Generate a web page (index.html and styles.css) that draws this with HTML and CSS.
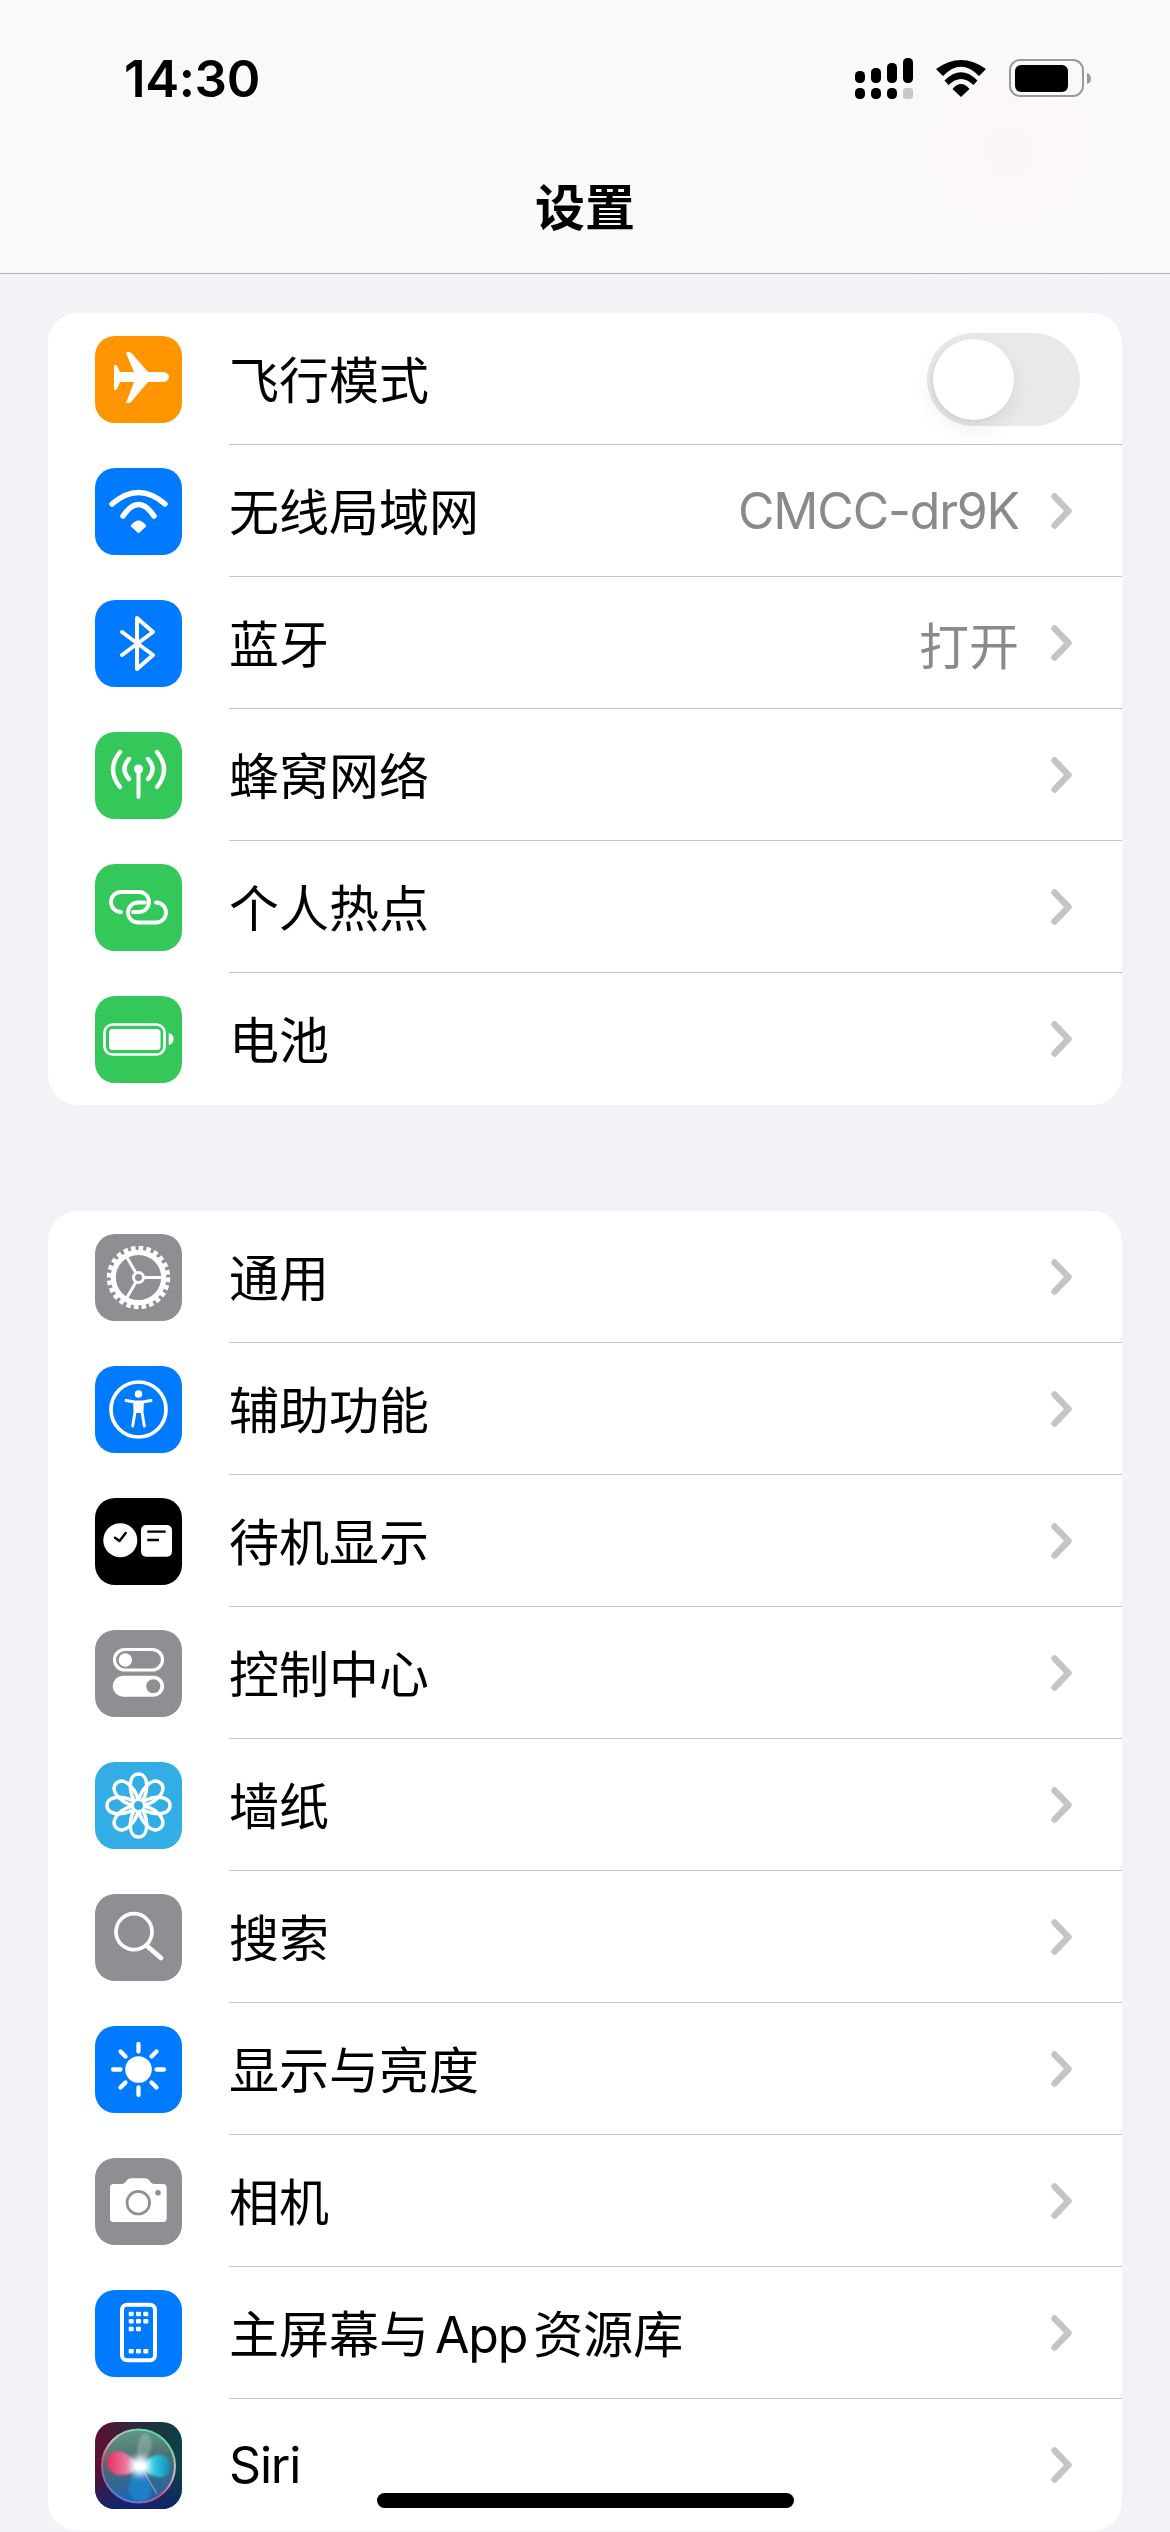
FILE: index.html
```html
<!DOCTYPE html>
<html lang="zh-CN">
<head>
    <meta charset="UTF-8">
    <meta name="viewport" content="width=device-width, initial-scale=1.0">
    <title>设置</title>
    <link rel="stylesheet" href="styles.css">
</head>
<body>
    <svg class="defs" width="0" height="0">
        <symbol id="chev" viewBox="0 0 21 36">
            <path d="M3.5 3.5 L17.5 18 L3.5 32.5" fill="none" stroke="#c4c4c6" stroke-width="6.4" stroke-linecap="round" stroke-linejoin="round"/>
        </symbol>
        <path id="petal" d="M43.5 43.5 C32.5 33 32.5 12 43.5 12 C54.5 12 54.5 33 43.5 43.5 Z" fill="none" stroke="#fff" stroke-width="3.5"/>
    </svg>

    <header class="top">
        <div class="status">
            <span class="time">14:30</span>
            <div class="status-icons">
                <svg width="58" height="41" viewBox="0 0 58 41">
                    <rect x="0" y="13" width="10" height="12" rx="4.5"/>
                    <rect x="16" y="10" width="10" height="15" rx="4.5"/>
                    <rect x="32" y="5" width="10" height="20" rx="4.5"/>
                    <rect x="48" y="0" width="10" height="25" rx="4.5"/>
                    <rect x="0" y="30" width="10" height="11" rx="4.5"/>
                    <rect x="16" y="30" width="10" height="11" rx="4.5"/>
                    <rect x="32" y="30" width="10" height="11" rx="4.5"/>
                    <rect x="48" y="30" width="10" height="11" rx="3" fill="#c8c8c8"/>
                </svg>
                <svg width="50" height="37" viewBox="0 0 50 37">
                    <path d="M0 9 Q25 -9 50 9 L43 16 Q25 -2.6 7 16 Z"/>
                    <path d="M8.5 20.5 Q25 4 41.5 20.5 L37.5 25 Q25 13 12.5 25 Z"/>
                    <path d="M16.5 29 Q25 19 33.5 29 L25 37 Z"/>
                </svg>
                <svg width="82" height="38" viewBox="0 0 82 38">
                    <rect x="1" y="1" width="73" height="36" rx="10" fill="none" stroke="#9a9a9a" stroke-width="2"/>
                    <rect x="6" y="6" width="53" height="27" rx="6"/>
                    <path d="M78 14 Q82 15 82 19.5 Q82 24 78 25 Z" fill="#9a9a9a"/>
                </svg>
            </div>
        </div>
        <h1 class="title">设置</h1>
    </header>

    <main class="content">
        <section class="card">
            <div class="row">
                <svg class="icon orange" viewBox="0 0 87 87">
                    <path fill="#fff" d="M31 17 Q31.5 16 33 16 L36 16.5 L53 36 H66 Q74 36 74 41 Q74 46 66 46 H53 L36 66 Q35 67 33 67 H31 L39 46 H25 L22 53 Q21.5 54 20 54 H19 V29 H20 Q21.5 29 22 30 L25 36 H39 Z"/>
                </svg>
                <div class="row-body toggle-row">
                    <span class="label">飞行模式</span>
                    <div class="toggle"><div class="knob"></div></div>
                </div>
            </div>
            <div class="row">
                <svg class="icon blue" viewBox="0 0 87 87">
                    <g fill="none" stroke="#fff" stroke-width="5.5" stroke-linecap="round">
                        <path d="M17 36 Q43.5 13 70 36"/>
                        <path d="M28 48 Q43.5 25 59 48"/>
                    </g>
                    <path fill="#fff" d="M35.5 58 Q43.5 47 51.5 58 L44.5 64.5 Q43.5 65.5 42.5 64.5 Z"/>
                </svg>
                <div class="row-body">
                    <span class="label">无线局域网</span>
                    <span class="value latin">CMCC-dr9K</span>
                    <svg class="chev"><use href="#chev"/></svg>
                </div>
            </div>
            <div class="row">
                <svg class="icon blue" viewBox="0 0 87 87">
                    <path d="M27 32 L58 55 L42 69 V18 L58 32 L27 55" fill="none" stroke="#fff" stroke-width="4" stroke-linecap="round" stroke-linejoin="round"/>
                </svg>
                <div class="row-body">
                    <span class="label">蓝牙</span>
                    <span class="value">打开</span>
                    <svg class="chev"><use href="#chev"/></svg>
                </div>
            </div>
            <div class="row">
                <svg class="icon green" viewBox="0 0 87 87">
                    <g fill="none" stroke="#fff" stroke-linecap="round">
                        <path stroke-width="4" d="M43.5 38 V65"/>
                        <g stroke-width="4.4">
                            <path d="M34 27 Q25 37 34 47"/>
                            <path d="M25 20 Q11 37.5 25 55"/>
                            <path d="M53 27 Q62 37 53 47"/>
                            <path d="M62 20 Q76 37.5 62 55"/>
                        </g>
                    </g>
                    <circle cx="43.5" cy="37" r="4.6" fill="#fff"/>
                </svg>
                <div class="row-body">
                    <span class="label">蜂窝网络</span>
                    <svg class="chev"><use href="#chev"/></svg>
                </div>
            </div>
            <div class="row">
                <svg class="icon green" viewBox="0 0 87 87">
                    <g fill="none" stroke="#fff" stroke-width="3.8" stroke-linecap="round">
                        <path d="M26 48 A10 10 0 0 1 26 28 H44 A10 10 0 0 1 44 48 H38"/>
                        <path d="M61 38.5 A10 10 0 0 1 61 58.5 H43 A10 10 0 0 1 43 38.5 H50"/>
                    </g>
                </svg>
                <div class="row-body">
                    <span class="label">个人热点</span>
                    <svg class="chev"><use href="#chev"/></svg>
                </div>
            </div>
            <div class="row">
                <svg class="icon green" viewBox="0 0 87 87">
                    <rect x="9.5" y="28.5" width="60" height="30" rx="8" fill="none" stroke="#fff" stroke-width="2.7"/>
                    <rect x="14" y="33" width="51.5" height="21" rx="3.5" fill="#fff"/>
                    <path d="M73.7 37 Q78.5 38 78.5 43 Q78.5 48 73.7 49 Z" fill="#fff"/>
                </svg>
                <div class="row-body">
                    <span class="label">电池</span>
                    <svg class="chev"><use href="#chev"/></svg>
                </div>
            </div>
        </section>

        <section class="card">
            <div class="row">
                <svg class="icon gray" viewBox="0 0 87 87">
                    <g fill="none" stroke="#fff">
                        <circle cx="43.5" cy="43.5" r="25.2" stroke-width="5.2"/>
                        <circle cx="43.5" cy="43.5" r="29.5" stroke-width="4.5" stroke-dasharray="4.6 3.12"/>
                        <path stroke-width="3" d="M49.5 43.5 H68 M40.5 38.3 L31 21.8 M40.5 48.7 L31 65.2"/>
                        <circle cx="43.5" cy="43.5" r="5" stroke-width="3"/>
                    </g>
                </svg>
                <div class="row-body">
                    <span class="label">通用</span>
                    <svg class="chev"><use href="#chev"/></svg>
                </div>
            </div>
            <div class="row">
                <svg class="icon blue" viewBox="0 0 87 87">
                    <circle cx="43.5" cy="43.5" r="27.5" fill="none" stroke="#fff" stroke-width="3.7"/>
                    <circle cx="43.5" cy="28" r="3.8" fill="#fff"/>
                    <path fill="#fff" d="M39 36.5 H48 L47.5 47 H39.5 Z"/>
                    <path fill="none" stroke="#fff" stroke-width="2.9" stroke-linecap="round" stroke-linejoin="round" d="M31 34.5 L39.5 36 L40 46 L37.7 60 M56 34.5 L47.5 36 L47 46 L49.3 60 M39.5 36 H47.5"/>
                </svg>
                <div class="row-body">
                    <span class="label">辅助功能</span>
                    <svg class="chev"><use href="#chev"/></svg>
                </div>
            </div>
            <div class="row">
                <svg class="icon black" viewBox="0 0 87 87">
                    <circle cx="25.3" cy="42.3" r="17" fill="#fff"/>
                    <path d="M20 39.7 L24.5 43 L30.7 35" fill="none" stroke="#000" stroke-width="2.5" stroke-linecap="round" stroke-linejoin="round"/>
                    <rect x="46" y="27" width="31" height="31.7" rx="5" fill="#fff"/>
                    <path d="M52.3 33.7 H70.7 M52.3 42 H64" stroke="#000" stroke-width="2.3"/>
                </svg>
                <div class="row-body">
                    <span class="label">待机显示</span>
                    <svg class="chev"><use href="#chev"/></svg>
                </div>
            </div>
            <div class="row">
                <svg class="icon gray" viewBox="0 0 87 87">
                    <rect x="19.5" y="19.5" width="48" height="20.5" rx="10.25" fill="none" stroke="#fff" stroke-width="3.2"/>
                    <circle cx="30.3" cy="30" r="6.7" fill="#fff"/>
                    <rect x="17.7" y="45.7" width="51.5" height="21" rx="10.5" fill="#fff"/>
                    <circle cx="58.3" cy="56.3" r="7" fill="#8e8e93"/>
                </svg>
                <div class="row-body">
                    <span class="label">控制中心</span>
                    <svg class="chev"><use href="#chev"/></svg>
                </div>
            </div>
            <div class="row">
                <svg class="icon sky" viewBox="0 0 87 87">
                    <use href="#petal"/>
                    <use href="#petal" transform="rotate(45 43.5 43.5)"/>
                    <use href="#petal" transform="rotate(90 43.5 43.5)"/>
                    <use href="#petal" transform="rotate(135 43.5 43.5)"/>
                    <use href="#petal" transform="rotate(180 43.5 43.5)"/>
                    <use href="#petal" transform="rotate(225 43.5 43.5)"/>
                    <use href="#petal" transform="rotate(270 43.5 43.5)"/>
                    <use href="#petal" transform="rotate(315 43.5 43.5)"/>
                    <circle cx="43.5" cy="43.5" r="5.5" fill="#32ade6" stroke="#fff" stroke-width="2"/>
                </svg>
                <div class="row-body">
                    <span class="label">墙纸</span>
                    <svg class="chev"><use href="#chev"/></svg>
                </div>
            </div>
            <div class="row">
                <svg class="icon gray" viewBox="0 0 87 87">
                    <circle cx="39" cy="37.7" r="18" fill="none" stroke="#fff" stroke-width="3.7"/>
                    <path d="M52 52 L66 64" stroke="#fff" stroke-width="4.8" stroke-linecap="round"/>
                </svg>
                <div class="row-body">
                    <span class="label">搜索</span>
                    <svg class="chev"><use href="#chev"/></svg>
                </div>
            </div>
            <div class="row">
                <svg class="icon blue" viewBox="0 0 87 87">
                    <circle cx="43.5" cy="43.5" r="13.3" fill="#fff"/>
                    <path stroke="#fff" stroke-width="4.3" stroke-linecap="round" d="M43.5 18 V25.5 M43.5 61.5 V69 M18 43.5 H25.5 M61.5 43.5 H69 M25.5 25.5 L30.5 30.5 M56.5 56.5 L61.5 61.5 M25.5 61.5 L30.5 56.5 M56.5 30.5 L61.5 25.5"/>
                </svg>
                <div class="row-body">
                    <span class="label">显示与亮度</span>
                    <svg class="chev"><use href="#chev"/></svg>
                </div>
            </div>
            <div class="row">
                <svg class="icon gray" viewBox="0 0 87 87">
                    <path fill="#fff" d="M18.5 26 H27 Q29 26 30.5 24 L32 22 Q33.5 20.3 36 20.3 H50 Q52.5 20.3 54 22 L55.5 24 Q57 26 59 26 H68 Q71.7 26 71.7 29.5 V60.5 Q71.7 64 68 64 H18.5 Q15 64 15 60.5 V29.5 Q15 26 18.5 26 Z"/>
                    <circle cx="43.3" cy="44.7" r="11.3" fill="none" stroke="#8e8e93" stroke-width="2.7"/>
                    <circle cx="63" cy="34.7" r="2.8" fill="#8e8e93"/>
                </svg>
                <div class="row-body">
                    <span class="label">相机</span>
                    <svg class="chev"><use href="#chev"/></svg>
                </div>
            </div>
            <div class="row">
                <svg class="icon blue" viewBox="0 0 87 87">
                    <rect x="27" y="14.7" width="33" height="55.5" rx="5" fill="none" stroke="#fff" stroke-width="4"/>
                    <g fill="#fff">
                        <rect x="33.7" y="21.7" width="5" height="4.6" rx="1"/>
                        <rect x="41" y="21.7" width="5" height="4.6" rx="1"/>
                        <rect x="48.3" y="21.7" width="5" height="4.6" rx="1"/>
                        <rect x="33.7" y="29" width="5" height="4.6" rx="1"/>
                        <rect x="41" y="29" width="5" height="4.6" rx="1"/>
                        <rect x="48.3" y="29" width="5" height="4.6" rx="1"/>
                        <rect x="33.7" y="36.7" width="5" height="4.6" rx="1"/>
                        <rect x="41" y="36.7" width="5" height="4.6" rx="1"/>
                        <rect x="33.7" y="59" width="5" height="4.6" rx="1"/>
                        <rect x="41" y="59" width="5" height="4.6" rx="1"/>
                        <rect x="48.3" y="59" width="5" height="4.6" rx="1"/>
                    </g>
                </svg>
                <div class="row-body">
                    <span class="label">主屏幕与 <span class="latin">App</span> 资源库</span>
                    <svg class="chev"><use href="#chev"/></svg>
                </div>
            </div>
            <div class="row">
                <svg class="icon siri" viewBox="0 0 87 87">
                    <defs>
                        <linearGradient id="siri-bg" x1="0" y1="0" x2="1" y2="0">
                            <stop offset="0" stop-color="#5c0f32"/>
                            <stop offset="0.5" stop-color="#2a2a3c"/>
                            <stop offset="1" stop-color="#0b4246"/>
                        </linearGradient>
                        <linearGradient id="siri-bottom" x1="0" y1="0" x2="0" y2="1">
                            <stop offset="0.55" stop-color="#12246e" stop-opacity="0"/>
                            <stop offset="1" stop-color="#12246e"/>
                        </linearGradient>
                        <linearGradient id="siri-ball" x1="0.45" y1="0" x2="0.55" y2="1">
                            <stop offset="0" stop-color="#5f9a84"/>
                            <stop offset="0.45" stop-color="#4c6a70"/>
                            <stop offset="1" stop-color="#1766b4"/>
                        </linearGradient>
                        <linearGradient id="siri-ring" x1="0.8" y1="0" x2="0.2" y2="1">
                            <stop offset="0" stop-color="#41e0a0"/>
                            <stop offset="0.4" stop-color="#e0b4c0"/>
                            <stop offset="0.65" stop-color="#e04a7c"/>
                            <stop offset="1" stop-color="#3a8ae8"/>
                        </linearGradient>
                        <linearGradient id="siri-pink" x1="0" y1="0" x2="1" y2="0">
                            <stop offset="0" stop-color="#e8305f"/>
                            <stop offset="0.7" stop-color="#e884a8"/>
                            <stop offset="1" stop-color="#f4d4e0"/>
                        </linearGradient>
                        <linearGradient id="siri-cyan" x1="0" y1="0" x2="1" y2="0">
                            <stop offset="0" stop-color="#8ceaf4"/>
                            <stop offset="0.5" stop-color="#2cc4dc"/>
                            <stop offset="1" stop-color="#1a8ab4"/>
                        </linearGradient>
                        <filter id="soft" x="-50%" y="-50%" width="200%" height="200%">
                            <feGaussianBlur stdDeviation="0.9"/>
                        </filter>
                        <filter id="glow" x="-100%" y="-100%" width="300%" height="300%">
                            <feGaussianBlur stdDeviation="3.2"/>
                        </filter>
                    </defs>
                    <rect width="87" height="87" fill="url(#siri-bg)"/>
                    <rect width="87" height="87" fill="url(#siri-bottom)"/>
                    <circle cx="43.5" cy="44" r="37" fill="url(#siri-ball)"/>
                    <path d="M45 44 C40 30 42 15 50 11 C62 17 56 34 45 44 Z" fill="#fff" opacity="0.22" filter="url(#soft)"/>
                    <path d="M45 44 C30 58 30 76 44 80 C60 78 60 60 45 44 Z" fill="#1f86d4" opacity="0.75" filter="url(#soft)"/>
                    <path d="M45 44 C36 32 22 25 15 32 C8 40 14 52 24 53 C32 54 40 50 45 44 Z" fill="url(#siri-pink)" filter="url(#soft)"/>
                    <path d="M45 44 C52 36 62 30 70 34 C78 39 76 52 68 55 C60 57 50 50 45 44 Z" fill="url(#siri-cyan)" filter="url(#soft)"/>
                    <path d="M46 45 L62 72" stroke="#f0a0b8" stroke-width="1.2" opacity="0.7"/>
                    <circle cx="43.5" cy="44" r="36.5" fill="none" stroke="url(#siri-ring)" stroke-width="2"/>
                    <circle cx="45" cy="44" r="10" fill="#e4f6fc" filter="url(#glow)"/>
                    <ellipse cx="45" cy="44" rx="6" ry="4" fill="#fff" filter="url(#soft)"/>
                </svg>
                <div class="row-body">
                    <span class="label latin-label"><span class="latin">Siri</span></span>
                    <svg class="chev"><use href="#chev"/></svg>
                </div>
            </div>
        </section>
    </main>

    <div class="home-bar"></div>
</body>
</html>
```

FILE: styles.css
```css
* {
    box-sizing: border-box;
}

html, body {
    margin: 0;
    padding: 0;
}

body {
    position: relative;
    width: 1170px;
    height: 2532px;
    overflow: hidden;
    background-color: #f2f2f7;
    color: #000;
    font-family: Inter, "Noto Sans CJK SC", sans-serif;
}

.defs {
    position: absolute;
}

.top {
    height: 274px;
    background: radial-gradient(circle at 1010px 150px, #fcf7f7, rgba(249, 249, 250, 0) 240px), #f9f9fa;
    border-bottom: 1px solid #b2b2b2;
}

.status {
    display: flex;
    justify-content: space-between;
    align-items: center;
    height: 156px;
    padding: 0 79px 0 124px;
}

.time {
    font-size: 51px;
    font-weight: 600;
    letter-spacing: -0.4px;
}

.status-icons {
    display: flex;
    align-items: center;
    gap: 23px;
}

.status-icons svg {
    display: block;
}

.title {
    margin: 0;
    font-size: 50px;
    font-weight: 700;
    line-height: 105px;
    text-align: center;
}

.content {
    display: flex;
    flex-direction: column;
    gap: 106px;
    padding: 39px 48px 0;
}

.card {
    background-color: #fff;
    border-radius: 30px;
    overflow: hidden;
}

.row {
    display: flex;
    align-items: center;
    height: 132px;
}

.icon {
    flex: none;
    width: 87px;
    height: 87px;
    margin: 0 47px;
    border-radius: 20px;
}

.orange { background-color: #ff9500; }
.blue { background-color: #007aff; }
.green { background-color: #34c759; }
.gray { background-color: #8e8e93; }
.black { background-color: #000; }
.sky { background-color: #32ade6; }

.row-body {
    flex: 1;
    display: flex;
    align-items: center;
    height: 132px;
    padding-right: 50px;
    border-bottom: 1px solid #c6c6c8;
}

.row:last-child .row-body {
    border-bottom: none;
}

.toggle-row {
    padding-right: 42px;
}

.label {
    flex: 1;
    margin-bottom: 4px;
    font-size: 50px;
    white-space: nowrap;
    word-spacing: -8px;
}

.latin-label {
    margin-bottom: 0;
}

.latin {
    letter-spacing: -1.2px;
}

.value {
    margin-right: 32px;
    font-size: 50px;
    color: #8a8a8e;
}

.chev {
    flex: none;
    width: 21px;
    height: 36px;
}

.toggle {
    display: flex;
    align-items: center;
    width: 153px;
    height: 93px;
    margin-top: 2px;
    padding-left: 6px;
    border-radius: 47px;
    background-color: #e9e9ea;
}

.knob {
    width: 81px;
    height: 81px;
    border-radius: 50%;
    background-color: #fff;
    box-shadow: 0 8px 22px rgba(0, 0, 0, 0.08), -2px 2px 4px rgba(0, 0, 0, 0.05);
}

.home-bar {
    position: absolute;
    left: 0;
    right: 0;
    bottom: 24px;
    width: 417px;
    height: 15px;
    margin: 0 auto;
    border-radius: 8px;
    background-color: #000;
}
```
